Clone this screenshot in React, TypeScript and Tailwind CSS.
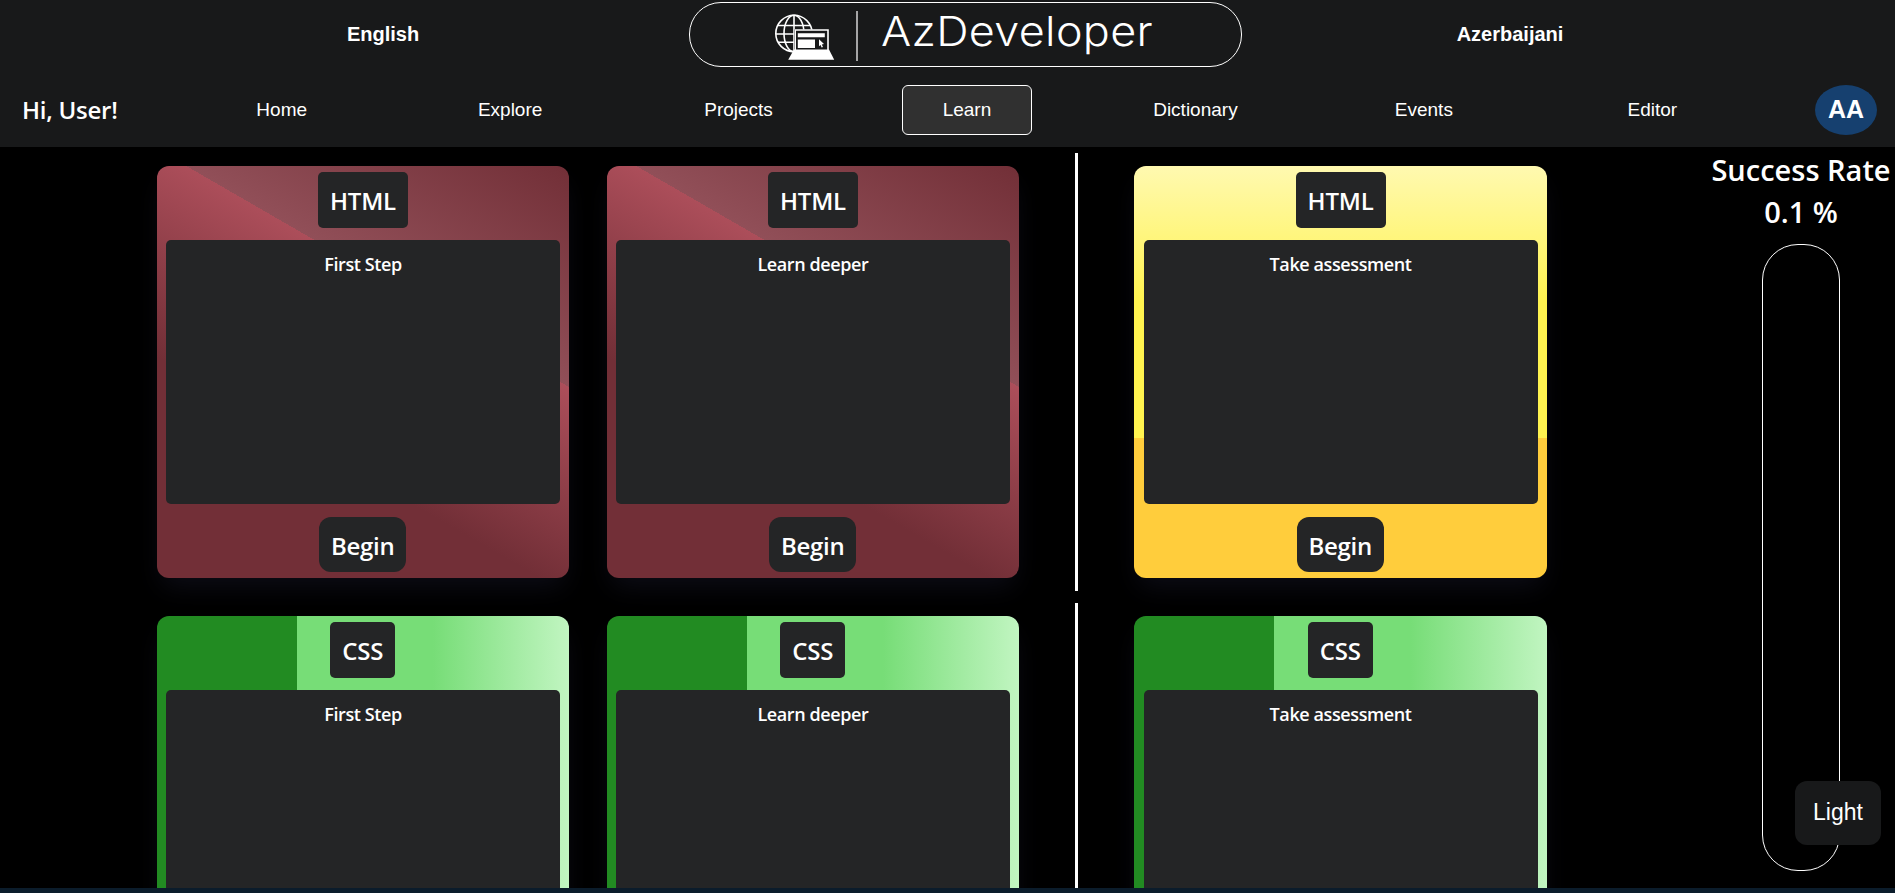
const NAV = ["Home", "Explore", "Projects", "Learn", "Dictionary", "Events", "Editor"];

const RED =
  "bg-[linear-gradient(210deg,#722f37_0%,#914f58_34%,#ac4e5a_34%,#722f37_66%)]";
const YELLOW =
  "bg-[linear-gradient(180deg,#fff9b0_0%,#fff34f_33%,#fff34f_66%,#ffcd3c_66%)]";
const GREEN =
  "bg-[linear-gradient(270deg,#c1f5c1_0%,#77dd77_33%,#77dd77_66%,#228b22_66%)]";

const ROWS = [
  { topic: "HTML", step: RED, assess: YELLOW, titleWidth: "w-[90px]", action: "Begin" },
  { topic: "CSS", step: GREEN, assess: GREEN, titleWidth: "w-[65px] mr-[0.6px]", action: "" },
];

function LogoMark() {
  return (
    <svg width="60" height="47" viewBox="0 0 60 47" fill="none" stroke="#fff" strokeWidth="1.6">
      <circle cx="19" cy="19.5" r="18.2" />
      <ellipse cx="19" cy="19.5" rx="10" ry="18.2" />
      <path d="M19 1.3V37.7M3 11.5H35M1 20H37M3 28.2H35" />
      <path d="M19 15.5H54V37H19Z" fill="#18191a" stroke="none" />
      <path d="M20.2 37V16H53V37" fill="#18191a" strokeWidth="1.6" />
      <g fill="#fff" stroke="none">
        <path d="M22.8 19.2H49.8V23.2H22.8ZM22.8 25.5H40V34H22.8Z" />
        <path d="M44 25.2L49 30L46.8 30.4L48 33L46.6 33.5L45.6 31L44 32.3Z" />
        <path d="M19 35.4H54L59.2 45.8H13.2Z" />
      </g>
    </svg>
  );
}

function Header() {
  return (
    <header className="h-[147px] shrink-0 bg-[#18191a]">
      <div className="flex h-[69px] pt-[2px] font-['Liberation_Sans',sans-serif] text-xl font-bold">
        <div className="ml-[77px] flex h-[65px] w-[612px] items-center justify-center pb-[2px]">English</div>
        <div className="flex h-[65px] w-[553px] items-start rounded-[32px] border border-white pl-[85px] pt-[10.5px]">
          <LogoMark />
          <div className="-mt-[3px] ml-[21px] h-[50px] w-[2px] bg-[#a5a5a6]" />
          <div className="-mt-[8px] ml-[23px] w-[275px] origin-left scale-x-[1.095] whitespace-nowrap font-['Inter',sans-serif] text-[41px] font-[340] leading-[50px] tracking-[0.3px]">
            AzDeveloper
          </div>
        </div>
        <div className="ml-px flex h-[65px] w-[534px] items-center justify-center pb-[2px]">Azerbaijani</div>
      </div>
      <div className="flex h-[78px] items-center pl-[22px] pt-[4px]">
        <div className="w-[146px] font-['Open_Sans',sans-serif] text-2xl font-semibold tracking-[-0.25px]">
          Hi, User!
        </div>
        <nav className="grid w-[1599px] grid-cols-7 justify-items-center font-['Liberation_Sans',sans-serif] text-[19px]">
          {NAV.map((item) => (
            <a
              key={item}
              className={
                item === "Learn"
                  ? "flex h-[50px] w-[130px] items-center justify-center rounded-[6px] border border-white bg-[#303030] pr-px"
                  : "flex h-[50px] w-[130px] items-center justify-center pr-px"
              }
            >
              {item}
            </a>
          ))}
        </nav>
        <div className="ml-[48px] flex h-[50px] w-[62px] items-center justify-center rounded-[50%] bg-[#16406f] font-['Liberation_Sans',sans-serif] text-[25px] font-bold">
          AA
        </div>
      </div>
    </header>
  );
}

type CardProps = { topic: string; label: string; fill: string; titleWidth: string; action: string };

function Card({ topic, label, fill, titleWidth, action }: CardProps) {
  return (
    <article
      className={`${fill} flex h-[412px] w-[412.4px] shrink-0 flex-col items-center rounded-[12px] pt-[6px] shadow-[0_13px_27px_-5px_rgba(50,50,93,0.25)]`}
    >
      <h2 className={`${titleWidth} flex h-[56px] items-center justify-center rounded-[5px] bg-[#242526] pt-px text-2xl font-semibold tracking-[-0.2px]`}>
        {topic}
      </h2>
      <div className="mt-[12px] flex h-[264px] w-[394px] justify-center rounded-[5px] bg-[#242526] pt-[10px] text-lg font-semibold tracking-[-0.4px]">
        {label}
      </div>
      {action && (
        <button className="mr-[0.6px] mt-[13px] flex h-[55px] w-[87px] items-center justify-center rounded-[12px] bg-[#242526] pt-[2px] text-2xl font-semibold tracking-[-0.3px]">
          {action}
        </button>
      )}
    </article>
  );
}

export default function App() {
  return (
    <div className="relative flex h-[893px] w-[1895px] flex-col overflow-hidden bg-black font-['Open_Sans',sans-serif] text-white">
      <Header />
      <main className="flex h-[741px] overflow-hidden">
        <section className="flex w-[1641px] flex-col gap-3 pl-[156.8px] pt-[6px]">
          {ROWS.map(({ topic, step, assess, titleWidth, action }) => (
            <div key={topic} className="flex h-[438px] shrink-0 items-center">
              <Card topic={topic} label="First Step" fill={step} titleWidth={titleWidth} action={action} />
              <div className="w-[37.6px] shrink-0" />
              <Card topic={topic} label="Learn deeper" fill={step} titleWidth={titleWidth} action={action} />
              <div className="ml-[56px] mr-[56.2px] h-full w-[3px] shrink-0 bg-white" />
              <Card topic={topic} label="Take assessment" fill={assess} titleWidth={titleWidth} action={action} />
            </div>
          ))}
        </section>
        <aside className="ml-[66px] flex w-[188px] flex-col items-center pt-[2px]">
          <div className="whitespace-nowrap text-center text-[29px] font-semibold leading-[42px]">
            Success Rate
            <br />
            0.1 %
          </div>
          <div className="mt-[11px] h-[627px] w-[78px] shrink-0 rounded-[36px] border border-white" />
        </aside>
      </main>
      <footer className="h-[5px] shrink-0 bg-[#0b1c2b]" />
      <button className="absolute bottom-[48px] right-[14px] h-[64px] w-[86px] rounded-[12px] bg-[#18191a] pb-[2px] font-['Liberation_Sans',sans-serif] text-[23px]">
        Light
      </button>
    </div>
  );
}
